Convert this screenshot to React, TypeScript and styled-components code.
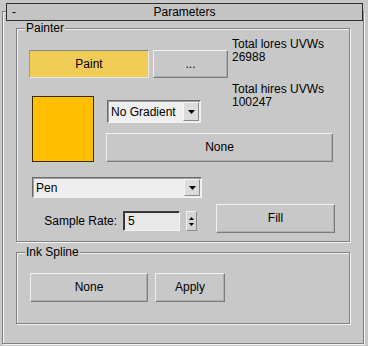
import React from 'react';
import styled, { createGlobalStyle } from 'styled-components';

const Global = createGlobalStyle`
  html, body { margin: 0; padding: 0; background: #c8c8c8; }
  body {
    font-family: "Liberation Sans", Arial, sans-serif;
    font-size: 12px;
    color: #000;
  }
  * { box-sizing: border-box; }
`;

const Page = styled.div`
  width: 368px;
  height: 346px;
  padding: 11px 0 0 2px;
  overflow: hidden;
`;

const Rollout = styled.div`
  width: 362px;
  height: 333px;
  border: 1px solid #808080;
  box-shadow: inset 1px 1px 0 #f4f4f4, 1px 1px 0 #f4f4f4;
`;

const TitleBar = styled.div`
  margin: -9px 0 0 3px;
  width: 357px;
  height: 18px;
  border: 1px solid #2e2e2e;
  background: #c4c4c4;
  display: flex;
  align-items: center;
  line-height: 14px;
  position: relative;
`;

const Collapse = styled.span`
  width: 12px;
  padding-left: 5px;
`;

const TitleText = styled.span`
  flex: 1;
  text-align: center;
  margin-right: 12px;
`;

const Group = styled.div<{ $top: number; $height: number }>`
  position: relative;
  margin: ${p => p.$top}px 0 0 13px;
  width: 334px;
  height: ${p => p.$height}px;
  border: 1px solid #808080;
  box-shadow: inset 1px 1px 0 #f4f4f4, 1px 1px 0 #f4f4f4;
`;

const Legend = styled.span`
  position: absolute;
  top: -8px;
  left: 8px;
  padding: 0 1px;
  line-height: 14px;
  background: #c8c8c8;
`;

const Row = styled.div<{ $h?: number; $mt?: number; $ml?: number }>`
  display: flex;
  align-items: flex-start;
  ${p => (p.$h !== undefined ? `height: ${p.$h}px;` : '')}
  margin-top: ${p => p.$mt ?? 0}px;
  margin-left: ${p => p.$ml ?? 0}px;
`;

const Button = styled.div<{ $w: number; $h?: number; $ml?: number; $mt?: number }>`
  width: ${p => p.$w}px;
  height: ${p => p.$h ?? 29}px;
  margin-left: ${p => p.$ml ?? 0}px;
  margin-top: ${p => p.$mt ?? 0}px;
  flex: none;
  display: flex;
  align-items: center;
  justify-content: center;
  background: #c8c8c8;
  border: 1px solid;
  border-color: #f0f0f0 #7c7c7c #7c7c7c #f0f0f0;
  box-shadow: inset -1px -1px 0 #b0b0b0;
  padding-bottom: 1px;
`;

const ToggleButton = styled(Button)`
  background: #f1cd58;
  border-color: #858585 #e8e8e8 #e8e8e8 #9a9a9a;
  box-shadow: none;
`;

const Stats = styled.div`
  margin: 9px 0 0 4px;
  line-height: 13.4px;
  white-space: nowrap;
`;

const StatBlock = styled.div<{ $mt?: number }>`
  margin-top: ${p => p.$mt ?? 0}px;
`;

const Swatch = styled.div<{ $color: string }>`
  flex: none;
  margin-left: 15px;
  width: 62px;
  height: 66px;
  background: ${p => p.$color};
  border: 1px solid #3a2a00;
`;

const Column = styled.div<{ $ml?: number }>`
  display: flex;
  flex-direction: column;
  align-items: flex-start;
  margin-left: ${p => p.$ml ?? 0}px;
`;

const Select = styled.div<{ $w: number; $h: number; $ml?: number; $mt?: number }>`
  width: ${p => p.$w}px;
  height: ${p => p.$h}px;
  margin-left: ${p => p.$ml ?? 0}px;
  margin-top: ${p => p.$mt ?? 0}px;
  flex: none;
  display: flex;
  align-items: center;
  background: #eeeeee;
  border: 1px solid;
  border-color: #6a6a6a #f2f2f2 #f2f2f2 #6a6a6a;
  box-shadow: inset 1px 1px 0 #a0a0a0;
  padding: 1px 1px 1px 3px;
`;

const SelectText = styled.span`
  flex: 1;
  line-height: 14px;
`;

const ArrowBox = styled.div`
  width: 16px;
  height: 100%;
  display: flex;
  align-items: center;
  justify-content: center;
  background: #dcdcdc;
  border: 1px solid;
  border-color: #f6f6f6 #8a8a8a #8a8a8a #f6f6f6;
`;

const DownTri = () => (
  <svg width="7" height="4" viewBox="0 0 7 4">
    <path d="M0 0H7L3.5 4Z" fill="#000" />
  </svg>
);

const SampleLabel = styled.span`
  width: 88px;
  text-align: right;
  line-height: 14px;
  margin-left: 12px;
`;

const NumInput = styled.div`
  margin-left: 6px;
  width: 57px;
  height: 20px;
  background: #e8e8e8;
  border: 1px solid;
  border-color: #404040 #f4f4f4 #f4f4f4 #404040;
  box-shadow: inset 1px 1px 0 #303030;
  padding: 2px 0 0 4px;
  line-height: 14px;
`;

const Spinner = styled.div`
  margin-left: 6px;
  width: 11px;
  height: 20px;
  display: flex;
  flex-direction: column;
  align-items: center;
  justify-content: space-around;
  padding: 3px 0;
  background: #d4d4d4;
  border: 1px solid;
  border-color: #f2f2f2 #8a8a8a #8a8a8a #f2f2f2;
`;

const SampleGroup = styled.div`
  display: flex;
  align-items: center;
  margin-top: 7px;
`;

export default function App() {
  return (
    <>
      <Global />
      <Page>
        <Rollout>
          <TitleBar>
            <Collapse>-</Collapse>
            <TitleText>Parameters</TitleText>
          </TitleBar>

          <Group $top={7} $height={214}>
            <Legend>Painter</Legend>
            <Row $h={67}>
              <ToggleButton $w={120} $h={28} $ml={12} $mt={21}>Paint</ToggleButton>
              <Button $w={75} $h={28} $ml={4} $mt={21}>...</Button>
              <Stats>
                <StatBlock>Total lores UVWs</StatBlock>
                <StatBlock>26988</StatBlock>
                <StatBlock $mt={18}>Total hires UVWs</StatBlock>
                <StatBlock>100247</StatBlock>
              </Stats>
            </Row>
            <Row>
              <Swatch $color="#ffbf00" />
              <Column $ml={12}>
                <Select $w={94} $h={23} $ml={1} $mt={4}>
                  <SelectText>No Gradient</SelectText>
                  <ArrowBox><DownTri /></ArrowBox>
                </Select>
                <Button $w={227} $mt={10}>None</Button>
              </Column>
            </Row>
            <Select $w={170} $h={21} $ml={15} $mt={15}>
              <SelectText>Pen</SelectText>
              <ArrowBox><DownTri /></ArrowBox>
            </Select>
            <Row $mt={6}>
              <SampleGroup>
                <SampleLabel>Sample Rate:</SampleLabel>
                <NumInput>5</NumInput>
                <Spinner>
                  <svg width="5" height="3" viewBox="0 0 5 3"><path d="M0 3H5L2.5 0Z" fill="#000" /></svg>
                  <svg width="5" height="3" viewBox="0 0 5 3"><path d="M0 0H5L2.5 3Z" fill="#000" /></svg>
                </Spinner>
              </SampleGroup>
              <Button $w={119} $ml={19}>Fill</Button>
            </Row>
          </Group>

          <Group $top={10} $height={72}>
            <Legend>Ink Spline</Legend>
            <Row $mt={20} $ml={13}>
              <Button $w={118}>None</Button>
              <Button $w={70} $ml={7}>Apply</Button>
            </Row>
          </Group>
        </Rollout>
      </Page>
    </>
  );
}
